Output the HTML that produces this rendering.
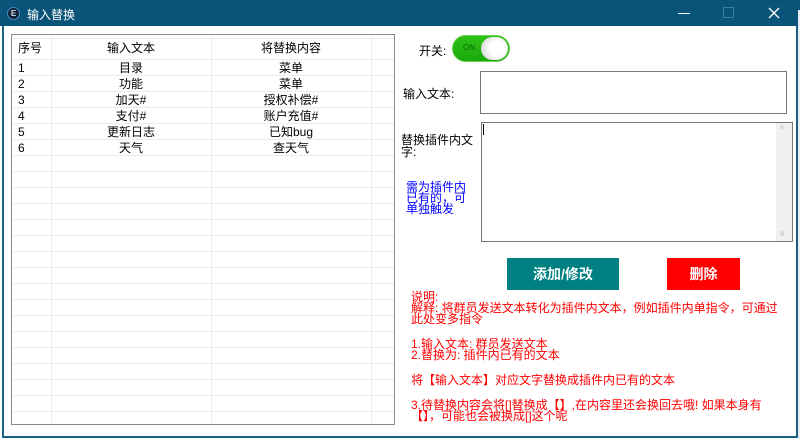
<!DOCTYPE html>
<html><head><meta charset="utf-8"><style>
*{margin:0;padding:0;box-sizing:border-box}
body{width:800px;height:439px;overflow:hidden;background:#fff;position:relative;font-family:"Liberation Sans","Noto Sans CJK SC",sans-serif;font-size:12px;color:#000}
.a{position:absolute}
.title{left:0;top:0;width:800px;height:26px;background:#0b5479}
.frame{left:2px;top:26px;width:796px;height:412px;border:2px solid #17607f;border-top:none}
.grid{left:11px;top:34px;width:384px;height:391px;border:1px solid #8a8a90;background:
repeating-linear-gradient(to bottom,transparent 0,transparent 15px,#ebebeb 15px,#ebebeb 16px);background-position:0 9px}
.vl{width:1px;background:#ebebeb;top:35px;height:389px}
.t{font-size:12px;line-height:16px;white-space:nowrap}
.red{color:#f00;font-size:12px;line-height:11px;white-space:nowrap}
.sp{height:14px}
</style></head><body>
<div class="a title"></div>
<div class="a" style="left:7px;top:7px;width:13px;height:13px;border-radius:50%;background:#123;border:1px solid #4a8ac0;color:#cde;font-size:8px;font-weight:bold;text-align:center;line-height:11px">E</div>
<div class="a" style="left:27px;top:6px;color:#fff;font-size:12px">输入替换</div>
<div class="a" style="left:678px;top:13px;width:12px;height:1px;background:#fff"></div>
<div class="a" style="left:723px;top:7px;width:11px;height:11px;border:1px solid #3f7da0"></div>
<svg class="a" style="left:768px;top:7px" width="12" height="12"><path d="M1 1L11 11M11 1L1 11" stroke="#fff" stroke-width="1.3"/></svg>
<div class="a frame"></div>
<div class="a" style="left:798px;top:10px;width:2px;height:429px;background:#e8eef4"></div>
<div class="a grid"></div>
<div class="a vl" style="left:51px"></div>
<div class="a vl" style="left:211px"></div>
<div class="a vl" style="left:371px"></div>
<div class="a t" style="left:18px;top:40px">序号</div>
<div class="a t" style="left:107px;top:40px">输入文本</div>
<div class="a t" style="left:261px;top:40px">将替换内容</div>
<div class="a t" style="left:18px;top:60px;line-height:16px">1<br>2<br>3<br>4<br>5<br>6</div>
<div class="a t" style="left:51px;top:60px;width:160px;text-align:center">目录<br>功能<br>加天#<br>支付#<br>更新日志<br>天气</div>
<div class="a t" style="left:211px;top:60px;width:160px;text-align:center">菜单<br>菜单<br>授权补偿#<br>账户充值#<br>已知bug<br>查天气</div>
<div class="a t" style="left:419px;top:43px">开关:</div>
<div class="a" style="left:452px;top:35px;width:58px;height:27px;border-radius:14px;background:linear-gradient(#2fc21a,#1aa80a);border:1px solid #6bd050"></div>
<div class="a" style="left:463px;top:43px;font-size:8px;color:#0a6a05">ON</div>
<div class="a" style="left:481px;top:37px;width:27px;height:23px;border-radius:12px;background:radial-gradient(circle at 60% 50%,#fff 35%,#ddd 80%)"></div>
<div class="a t" style="left:403px;top:86px">输入文本:</div>
<div class="a" style="left:480px;top:71px;width:307px;height:43px;border:1px solid #777"></div>
<div class="a t" style="left:401px;top:134px;line-height:12px">替换插件内文<br>字:</div>
<div class="a" style="left:481px;top:122px;width:312px;height:120px;border:1px solid #777"></div>
<div class="a" style="left:776px;top:123px;width:16px;height:118px;background:#f0f0f0"></div>
<div class="a" style="left:483px;top:124px;width:1px;height:11px;background:#000"></div>
<div class="a" style="left:780px;top:124px;color:#bbb;font-size:9px">^</div>
<div class="a" style="left:780px;top:228px;color:#bbb;font-size:9px">v</div>
<div class="a" style="left:406px;top:182px;color:#00f;font-size:12px;line-height:11px">需为插件内<br>已有的，可<br>单独触发</div>
<div class="a" style="left:507px;top:258px;width:112px;height:32px;background:#008080;color:#fff;font-weight:bold;font-size:14px;text-align:center;line-height:32px">添加/修改</div>
<div class="a" style="left:667px;top:258px;width:73px;height:32px;background:#f00;color:#fff;font-weight:bold;font-size:14px;text-align:center;line-height:32px">删除</div>
<div class="a red" style="left:411px;top:292px">说明:<br>解释: 将群员发送文本转化为插件内文本，例如插件内单指令，可通过<br>此处变多指令<div class="sp"></div>1.输入文本: 群员发送文本<br>2.替换为: 插件内已有的文本<div class="sp"></div>将【输入文本】对应文字替换成插件内已有的文本<div class="sp"></div>3.待替换内容会将[]替换成【】,在内容里还会换回去哦! 如果本身有<br>【】，可能也会被换成[]这个呢</div>
</body></html>
